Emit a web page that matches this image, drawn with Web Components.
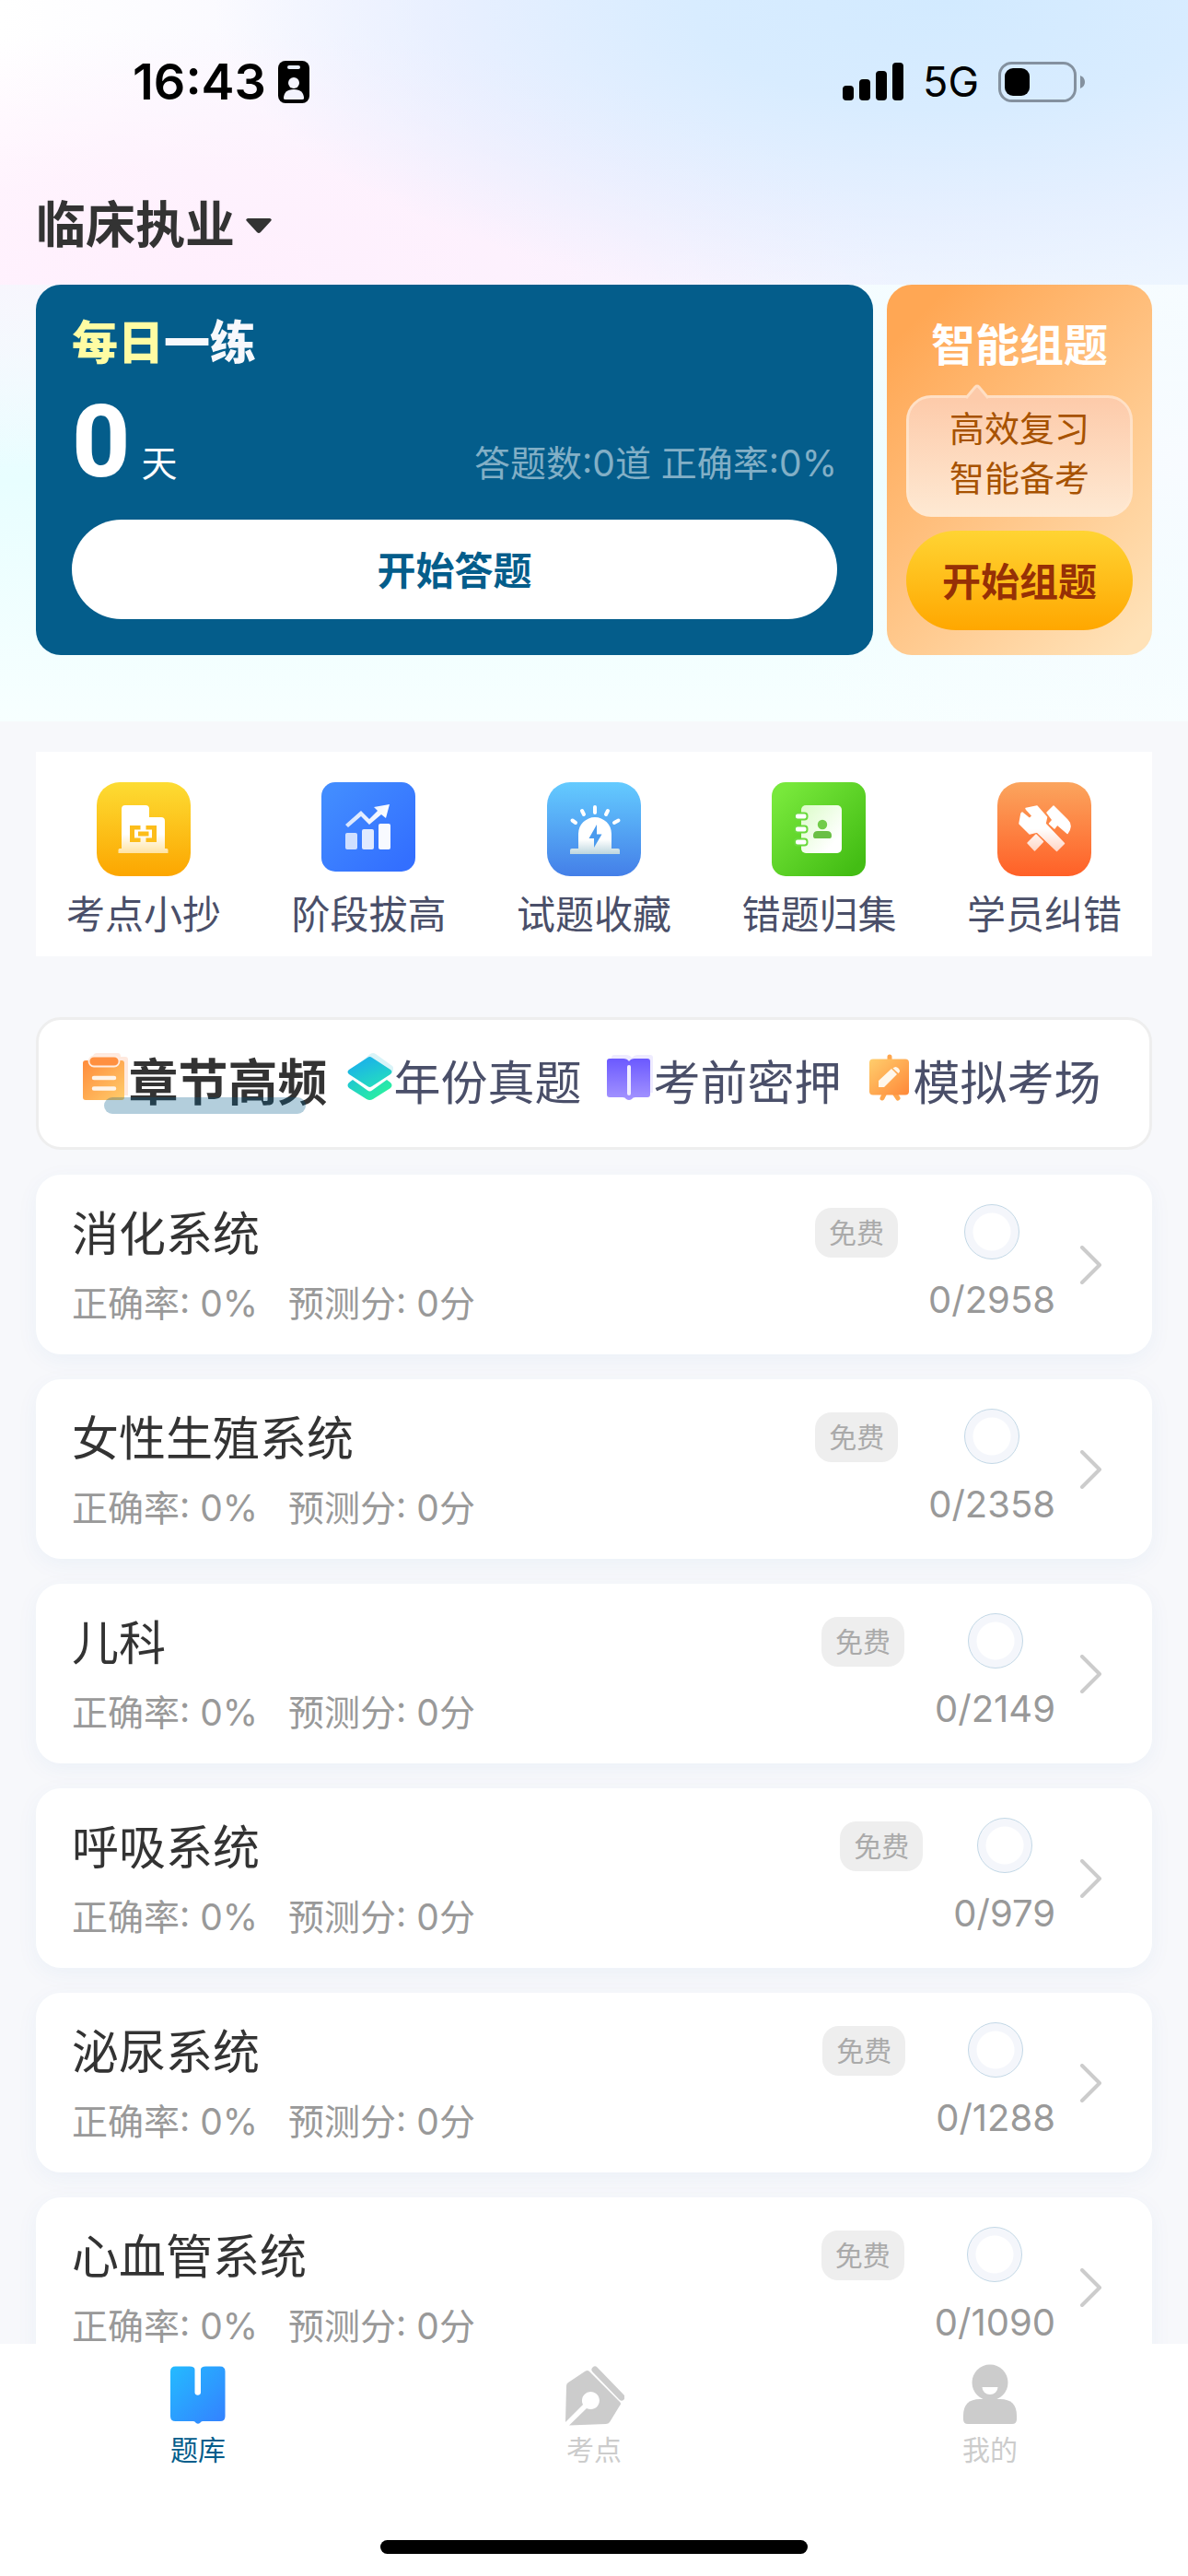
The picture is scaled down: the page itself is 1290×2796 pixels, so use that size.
<!DOCTYPE html>
<html lang="zh-CN">
<head>
<meta charset="utf-8">
<meta name="viewport" content="width=device-width, initial-scale=1">
<title>题库</title>
<style>
    html, body {
        margin: 0;
        height: 100%;
    }
    body {
        font-family: Inter, "Noto Sans CJK SC", sans-serif;
        color: #333;
        background: #f7f8fb;
    }
</style>
</head>
<body>
<exam-app></exam-app>

<script>
const reset = `
    * { box-sizing: border-box; }
    button { font: inherit; color: inherit; border: 0; padding: 0; margin: 0; background: none; cursor: pointer; }
    a { color: inherit; text-decoration: none; }
    svg { display: block; flex: none; }
`;

function define(name, html, setup) {
    const template = document.createElement('template');
    template.innerHTML = html;
    window.customElements.define(name, class extends HTMLElement {
        constructor() {
            super();
            this.attachShadow({mode: 'open'});
            this.shadowRoot.appendChild(template.content.cloneNode(true));
        }

        connectedCallback() {
            if (setup) {
                setup(this, this.shadowRoot);
            }
        }
    });
}

const quickIcons = {
    notes: `
        <svg width="102" height="102" viewBox="0 0 102 102">
            <defs>
                <linearGradient id="bg" x1="0" y1="0" x2="0" y2="1"><stop offset="0" stop-color="#fddc33"/><stop offset="1" stop-color="#fca600"/></linearGradient>
                <linearGradient id="fg" x1="0" y1="0" x2="0" y2="1"><stop offset=".6" stop-color="#fff"/><stop offset="1" stop-color="#ffe3a3"/></linearGradient>
            </defs>
            <rect width="102" height="102" rx="25" fill="url(#bg)"/>
            <path d="M27 29q0-4 4-4h22q4 0 4 4v9h13q4 0 4 4v30h2q1.500 0 1.500 1.500V77h-54v-3.500q0-1.500 1.500-1.500H27z" fill="url(#fg)"/>
            <path d="M47.500 47H36v18h11.500v-4.500H41v-9h6.500zM53.500 47H65v18H53.500v-4.500H60v-9h-6.500zM45 53.500h11.500v5H45z" fill="#fcbd1a"/>
        </svg>`,
    chart: `
        <svg width="102" height="102" viewBox="0 0 102 102">
            <defs>
                <linearGradient id="bg" x1="0" y1="0" x2="1" y2="1"><stop offset=".1" stop-color="#428cff"/><stop offset=".9" stop-color="#336fff"/></linearGradient>
                <linearGradient id="fg" x1="0" y1="0" x2="1" y2=".3"><stop offset="0" stop-color="#c9dcff"/><stop offset="1" stop-color="#fff"/></linearGradient>
            </defs>
            <rect width="102" height="97" rx="15" fill="url(#bg)"/>
            <rect x="26" y="55" width="13" height="18" rx="2" fill="#cfdfff"/>
            <rect x="44" y="51" width="13" height="22" rx="2" fill="#e0eaff"/>
            <rect x="62" y="45" width="13" height="28" rx="2" fill="#f8faff"/>
            <path d="M26 46L43 31l9 9 9-9-4-4 17-3-4 15-5-4-13 11-9-9-14 12z" fill="url(#fg)"/>
        </svg>`,
    alarm: `
        <svg width="102" height="102" viewBox="0 0 102 102">
            <defs>
                <linearGradient id="bg" x1="0" y1="0" x2="0" y2="1"><stop offset="0" stop-color="#64cbff"/><stop offset="1" stop-color="#447fe8"/></linearGradient>
                <linearGradient id="fg" x1="0" y1="0" x2="0" y2="1"><stop offset=".6" stop-color="#fff"/><stop offset="1" stop-color="#bcd6de"/></linearGradient>
            </defs>
            <rect width="102" height="102" rx="25" fill="url(#bg)"/>
            <path d="M34 72V56a18 18 0 0 1 36 0v16h7q2 0 2 2v4H25v-4q0-2 2-2z" fill="url(#fg)"/>
            <path d="M52 27v6M66 31l-2 4M77.500 41.500L73 44M38 31l2 4M27.500 41.500L31 44" stroke="#fff" stroke-width="4" stroke-linecap="round"/>
            <path d="M54 46l-8.500 15H51v10l8.500-14.500H54z" fill="#4b9bee"/>
        </svg>`,
    book: `
        <svg width="102" height="102" viewBox="0 0 102 102">
            <defs>
                <linearGradient id="bg" x1="0" y1="0" x2="1" y2="1"><stop offset=".1" stop-color="#78e83b"/><stop offset=".9" stop-color="#43bd14"/></linearGradient>
                <linearGradient id="fg" x1="0" y1="0" x2="1" y2="1"><stop offset="0" stop-color="#dbfcc8"/><stop offset=".8" stop-color="#fff"/></linearGradient>
            </defs>
            <rect width="102" height="102" rx="15" fill="url(#bg)"/>
            <rect x="32" y="25" width="44" height="52" rx="5" fill="url(#fg)"/>
            <g fill="#fff" stroke="#6ada3c" stroke-width="2">
                <rect x="25" y="33.500" width="13.500" height="7" rx="3"/>
                <rect x="25" y="47.500" width="13.500" height="7" rx="3"/>
                <rect x="25" y="61.500" width="13.500" height="7" rx="3"/>
            </g>
            <circle cx="55" cy="46" r="5.200" fill="#72cc4a"/>
            <path d="M45 58q0-5 5-5h10q5 0 5 5 0 3-2 3H47q-2 0-2-3z" fill="#6abf45"/>
        </svg>`,
    tools: `
        <svg width="102" height="102" viewBox="0 0 102 102">
            <defs>
                <linearGradient id="bg" x1="0" y1="0" x2="0" y2="1"><stop offset="0" stop-color="#fba55e"/><stop offset="1" stop-color="#ff6027"/></linearGradient>
                <linearGradient id="fg" gradientUnits="userSpaceOnUse" x1="0" y1="25" x2="0" y2="76"><stop offset=".5" stop-color="#fff"/><stop offset="1" stop-color="#ffd3c2"/></linearGradient>
            </defs>
            <rect width="102" height="102" rx="25" fill="url(#bg)"/>
            <g fill="url(#fg)" stroke="url(#fg)" stroke-width="1.500" stroke-linejoin="round">
                <path d="M31 28.500L43 26l10.500 12L52 45l20.500 21.500-8 8L43 54l-8 2-11-11 2-11 1-1 8 6.500 3-3-6.500-7z"/>
                <path d="M61 26l15 15q6 6 0 14.500L65 46l-3 4-5.500-5 3.500-4-6-8z"/>
                <path d="M42 57l7.500 7.500L40.500 74 33 66z"/>
            </g>
        </svg>`
};

const tabIcons = {
    clipboard: `
        <svg width="51" height="54" viewBox="0 0 51 54">
            <defs><linearGradient id="a" x1="0" y1="0" x2="1" y2="1"><stop offset="0" stop-color="#ff8b3b"/><stop offset="1" stop-color="#ffcd6b"/></linearGradient></defs>
            <path d="M12 3q1-3 4-3h23q3 0 3 4h5q3 0 3 3v39H12z" fill="#ffe9de"/>
            <rect x="1" y="8" width="45" height="43" rx="3" fill="url(#a)"/>
            <rect x="7.500" y="3.500" width="33" height="11" rx="5.500" fill="#ff9040" stroke="#ffede2" stroke-width="1.800"/>
            <path d="M13 27h22M13 38.500h22" stroke="#fff4e8" stroke-width="4.500" stroke-linecap="round"/>
        </svg>`,
    layers: `
        <svg width="51" height="54" viewBox="0 0 51 54">
            <defs><linearGradient id="a" x1="0" y1="0" x2=".6" y2="1"><stop offset=".3" stop-color="#1cb7e4"/><stop offset="1" stop-color="#24dcc0"/></linearGradient>
            <linearGradient id="b" x1="0" y1="0" x2="1" y2=".6"><stop offset="0" stop-color="#1fc6d3"/><stop offset="1" stop-color="#2bf29e"/></linearGradient></defs>
            <path d="M26 1q3-2 6 0l18 13q3 3 0 6L31 34 10 15z" fill="#d9f4f8"/>
            <path d="M7 29l16 11.500q2.500 2 5 0L44 29l4 3q3 3 0 6L29 50q-3.500 2-7 0L3 38q-3-3 0-6z" fill="url(#b)"/>
            <path d="M23 5q2.500-2 5 0l20 13q3 2.500 0 5L28 36q-2.500 2-5 0L3 23q-3-2.500 0-5z" fill="url(#a)"/>
        </svg>`,
    open: `
        <svg width="51" height="54" viewBox="0 0 51 54">
            <defs><linearGradient id="a" x1="0" y1="0" x2="0" y2="1"><stop offset="0" stop-color="#6b59ff"/><stop offset="1" stop-color="#a494ff"/></linearGradient></defs>
            <path d="M6 5q0-3 3-3h13q4 0 6 3 3-3 6-3h14q3 0 3 3v38H6z" fill="#eeebff"/>
            <path d="M1 9q0-3 3-3h15q4 0 6 3 2-3 6-3h14q3 0 3 3v36q0 3-3 3H32q-3 0-4 2-3 2-6 0-1-2-4-2H4q-3 0-3-3z" fill="url(#a)"/>
            <path d="M25 15v29" stroke="#f1edff" stroke-width="4" stroke-linecap="round"/>
        </svg>`,
    board: `
        <svg width="51" height="54" viewBox="0 0 51 54">
            <defs><linearGradient id="a" x1="0" y1="0" x2="1" y2="1"><stop offset="0" stop-color="#ffce6d"/><stop offset="1" stop-color="#ff8838"/></linearGradient></defs>
            <path d="M26 4v8M21 43l-3 6M31 43l4 6" stroke="#ffa64d" stroke-width="5" stroke-linecap="round"/>
            <rect x="4" y="6.500" width="43" height="39" rx="4" fill="url(#a)"/>
            <path d="M14 37v-7l14-13 6 6-14 14zM29.500 16.500q3-3 6 0t0 5.500z" fill="#fff7ea"/>
        </svg>`
};

const navIcons = {
    bank: `
        <svg width="66" height="69" viewBox="0 0 66 69">
            <defs><linearGradient id="a" x1="0" y1="0" x2="1" y2="1"><stop offset="0" stop-color="#24bbff"/><stop offset="1" stop-color="#3480ff"/></linearGradient></defs>
            <path d="M3 8q0-5.500 5.500-5.500H24q5.500 0 5.500 3.500v25a3.300 3.300 0 0 0 6.500 0V6q0-3.500 5.500-3.500H57q5.500 0 5.500 5.500v48.500q0 5.500-5.500 5.500H38q-1.500 0-3 2-2 1.500-4 0-1.500-2-3-2H8.500Q3 62 3 56.500z" fill="url(#a)"/>
        </svg>`,
    pen: `
        <svg width="66" height="69" viewBox="0 0 66 69">
            <path d="M2 63L3 24q0-3 2-4L23 8q3-2 5 0l33 33q2 2 0 4L50 63q-1.500 2-4 2l-40 1.500 19-18.500a9.500 9.500 0 1 0-4-4z" fill="#ccc"/>
            <path d="M34 6l29 30" stroke="#ccc" stroke-width="7" stroke-linecap="round"/>
        </svg>`,
    user: `
        <svg width="66" height="69" viewBox="0 0 66 69">
            <circle cx="33" cy="20" r="19.500" fill="#ccc"/>
            <path d="M4 60V56q0-18 18-18h22q18 0 18 18v4q0 5-5 5H9q-5 0-5-5z" fill="#ccc"/>
            <path d="M24.500 25h17a8.500 8 0 0 1-17 0z" fill="#fff"/>
        </svg>`
};

define('status-bar', `
    <style>
        ${reset}
        :host { display: flex; justify-content: space-between; align-items: center; height: 177px; padding: 0 111px 0 144px; color: #000; }
        div { display: flex; align-items: center; }
        .left { gap: 12px; }
        .right { gap: 21px; }
        time { font-size: 54px; font-weight: 600; }
        .net { font-size: 45px; }
    </style>
    <div class="left">
        <time>16:43</time>
        <svg width="36" height="48" viewBox="0 0 36 48">
            <rect x="1" y="1" width="34" height="46" rx="8"/>
            <rect x="11" y="6" width="14" height="4" rx="2" fill="#e8eefb"/>
            <circle cx="18" cy="25" r="6" fill="#f3f3fd"/>
            <path d="M7 42q0-10 11-10t11 10q0 1-2 1H9q-2 0-2-1z" fill="#f3f3fd"/>
        </svg>
    </div>
    <div class="right">
        <svg width="66" height="42" viewBox="0 0 66 42">
            <rect y="25" width="12" height="16" rx="4"/>
            <rect x="18" y="18" width="12" height="23" rx="4"/>
            <rect x="36" y="9" width="12" height="32" rx="4"/>
            <rect x="54" width="12" height="41" rx="4"/>
        </svg>
        <span class="net">5G</span>
        <svg width="95" height="44" viewBox="0 0 95 44">
            <rect x="1.500" y="1.500" width="82" height="41" rx="13" fill="none" stroke="#84919f" stroke-width="3"/>
            <rect x="7" y="7" width="27" height="30" rx="9"/>
            <path d="M89 15q5 2 5 7t-5 7z" fill="#84919f"/>
        </svg>
    </div>
`);

define('page-header', `
    <style>
        ${reset}
        :host {
            display: block;
            background:
                radial-gradient(ellipse 62% 110% at 80% 0%, #d2eaff 0%, #d8ecff 35%, rgba(224, 236, 255, .6) 70%, rgba(240, 242, 255, 0) 100%),
                radial-gradient(ellipse 60% 90% at 16% 100%, #ffeffd 0%, rgba(255, 240, 253, .8) 45%, rgba(255, 243, 254, 0) 100%),
                linear-gradient(90deg, #fff 0%, #f6f5ff 40%, #eef6ff 100%);
        }
        .bar { display: flex; align-items: center; height: 132px; padding: 3px 39px 0; }
        button { display: flex; align-items: center; gap: 12px; font-size: 54px; font-weight: 600; line-height: 72px; }
    </style>
    <status-bar></status-bar>
    <div class="bar">
        <button type="button"><slot></slot>
            <svg width="28" height="16" viewBox="0 0 28 16"><path d="M2 0h24q3 1 1 3L16 15q-2 2-4 0L1 3q-2-2 1-3z" fill="#333"/></svg>
        </button>
    </div>
`);

define('daily-card', `
    <style>
        ${reset}
        :host { display: flex; flex-direction: column; padding: 39px; border-radius: 27px; background: #045d8b; color: #fff; }
        h2 { margin: 0; white-space: nowrap; font-size: 50px; font-weight: 900; line-height: 48px; color: #f7f8fc; }
        h2 em { font-style: normal; color: #fffca3; }
        .stats { display: flex; align-items: baseline; justify-content: space-between; height: 168px; line-height: 168px; }
        b { margin-right: 12px; font: 800 110px/168px Roboto, sans-serif; }
        .unit { font-size: 39px; }
        .rate { font-size: 39px; color: #82afc6; }
        button { height: 108px; padding-bottom: 3px; border-radius: 54px; background: #fff; color: #045d8b; font-size: 42px; font-weight: 600; }
    </style>
    <h2><em>每日</em>一练</h2>
    <div class="stats">
        <span><b>0</b><span class="unit">天</span></span>
        <span class="rate">答题数:0道 正确率:0%</span>
    </div>
    <button type="button">开始答题</button>
`);

define('smart-card', `
    <style>
        ${reset}
        :host { display: flex; flex-direction: column; padding: 30px 21px 27px; border-radius: 27px; background: linear-gradient(135deg, #ffa754 10%, #ffe2b8 95%); text-align: center; }
        h2 { margin: 0 0 18px; font-size: 48px; font-weight: 700; line-height: 72px; color: #fff; }
        .bubble { position: relative; margin-bottom: 15px; padding: 6px 9px 12px; border: 3px solid rgba(255, 232, 208, .7); border-radius: 27px; background: linear-gradient(#fdcaa9, #fee9d3) border-box; font-size: 38px; line-height: 54px; color: #a75200; }
        .bubble svg { position: absolute; left: 60px; top: -15px; }
        p { margin: 0; }
        button { height: 108px; padding-bottom: 3px; border-radius: 54px; background: linear-gradient(#ffd433, #ffa700); color: #963006; font-size: 42px; font-weight: 700; }
    </style>
    <h2>智能组题</h2>
    <div class="bubble">
        <svg width="28" height="17" viewBox="0 0 28 17"><path d="M2 17L12 3q2-2 4 0l10 14" fill="#fdcaa9"/><path d="M2 15L12 3q2-2 4 0l10 12" fill="none" stroke="#ffdfc4" stroke-width="3"/></svg>
        <p>高效复习</p>
        <p>智能备考</p>
    </div>
    <button type="button">开始组题</button>
`);

define('quick-link', `
    <style>
        ${reset}
        :host { display: block; }
        a { display: flex; flex-direction: column; align-items: center; gap: 12px; font-size: 42px; line-height: 60px; color: #4a4f69; white-space: nowrap; }
    </style>
    <a href="#"><span class="icon"></span><slot></slot></a>
`, (el, root) => {
    root.querySelector('.icon').innerHTML = quickIcons[el.getAttribute('icon')];
});

define('quick-menu', `
    <style>
        :host { display: flex; justify-content: space-between; padding: 33px 33px 15px; background: #fff; }
    </style>
    <slot></slot>
`);

define('tab-item', `
    <style>
        ${reset}
        :host { display: flex; flex: 1; justify-content: center; }
        button { position: relative; display: flex; align-items: center; height: 66px; font-size: 51px; line-height: 66px; color: #4a4f69; white-space: nowrap; }
        .icon { padding-bottom: 12px; }
        :host([active]) button { font-size: 54px; font-weight: 700; color: #333; }
        :host([active]) button::after { content: ""; position: absolute; left: 24px; right: 24px; bottom: 0; height: 18px; border-radius: 9px; background: rgba(4, 93, 139, .3); }
    </style>
    <button type="button" role="tab"><span class="icon"></span><slot></slot></button>
`, (el, root) => {
    root.querySelector('.icon').innerHTML = tabIcons[el.getAttribute('icon')];
    root.querySelector('button').setAttribute('aria-selected', el.hasAttribute('active'));
});

define('tab-strip', `
    <style>
        :host { box-sizing: border-box; display: flex; align-items: center; height: 144px; padding: 0 39px; border: 3px solid #eee; border-radius: 27px; background: #fff; }
    </style>
    <slot></slot>
`);

define('chapter-row', `
    <style>
        ${reset}
        :host { display: block; }
        a { display: flex; align-items: center; height: 195px; padding: 0 54px 0 39px; border-radius: 27px; background: #fff; box-shadow: 0 6px 24px rgba(4, 93, 180, .05); }
        .info { flex: 1; padding-top: 3px; }
        h3 { margin: 0; font-size: 51px; font-weight: 400; line-height: 72px; }
        .sub { display: flex; gap: 33px; margin-top: 9px; font-size: 39px; line-height: 60px; color: #999; }
        .free { align-self: flex-start; margin: 36px 33px 0 0; padding: 0 15px; border-radius: 18px; background: #eee; color: #aaa; font-size: 30px; line-height: 54px; }
        .count { display: flex; flex-direction: column; align-items: center; gap: 15px; margin-right: 27px; color: #999; font-size: 40px; line-height: 57px; }
        .ring { width: 60px; height: 60px; border: 1px solid #c3d8e6; border-radius: 50%; background: radial-gradient(circle, #fff 20px, #f4f6fb 21px); }
    </style>
    <a href="#">
        <div class="info">
            <h3><slot></slot></h3>
            <div class="sub"><span>正确率: 0%</span><span>预测分: 0分</span></div>
        </div>
        <span class="free">免费</span>
        <div class="count"><span class="ring"></span><span class="num"></span></div>
        <svg width="24" height="42" viewBox="0 0 24 42"><path d="M2 2l19 19L2 40" fill="none" stroke="#ccc" stroke-width="4" stroke-linecap="round" stroke-linejoin="round"/></svg>
    </a>
`, (el, root) => {
    root.querySelector('.num').textContent = '0/' + el.getAttribute('total');
});

define('nav-link', `
    <style>
        ${reset}
        :host { display: block; flex: 1; }
        a { display: flex; flex-direction: column; align-items: center; font-size: 30px; line-height: 48px; color: #ccc; }
        :host([active]) a { color: #045d8b; }
    </style>
    <a href="#"><span class="icon"></span><slot></slot></a>
`, (el, root) => {
    root.querySelector('.icon').innerHTML = navIcons[el.getAttribute('icon')];
});

define('bottom-nav', `
    <style>
        :host { box-sizing: border-box; display: flex; flex-direction: column; justify-content: space-between; align-items: center; height: 252px; padding: 22px 0 24px; background: #fff; }
        nav { display: flex; width: 100%; }
        .home { width: 36%; height: 15px; border-radius: 8px; background: #000; }
    </style>
    <nav><slot></slot></nav>
    <div class="home"></div>
`);

define('exam-app', `
    <style>
        ${reset}
        :host { display: flex; flex-direction: column; height: 100vh; }
        main { flex: 1; min-height: 0; overflow: hidden; }
        .hero {
            display: flex; gap: 15px; padding: 0 39px 72px;
            background:
                radial-gradient(ellipse 60% 70% at 0% 0%, #f7f6fd 0%, rgba(247, 246, 253, 0) 60%),
                radial-gradient(ellipse 40% 90% at 100% 40%, #f8fbff 0%, rgba(248, 251, 255, 0) 100%),
                linear-gradient(#f4fdff 0%, #e8feff 45%, #f7ffff 100%);
        }
        daily-card { flex: 1; }
        smart-card { flex: none; width: 288px; }
        .content { display: flex; flex-direction: column; gap: 27px; padding: 33px 39px; }
        quick-menu { margin-bottom: 39px; }
    </style>
    <main>
        <page-header>临床执业</page-header>
        <section class="hero">
            <daily-card></daily-card>
            <smart-card></smart-card>
        </section>
        <section class="content">
            <quick-menu>
                <quick-link icon="notes">考点小抄</quick-link>
                <quick-link icon="chart">阶段拔高</quick-link>
                <quick-link icon="alarm">试题收藏</quick-link>
                <quick-link icon="book">错题归集</quick-link>
                <quick-link icon="tools">学员纠错</quick-link>
            </quick-menu>
            <tab-strip role="tablist">
                <tab-item icon="clipboard" active>章节高频</tab-item>
                <tab-item icon="layers">年份真题</tab-item>
                <tab-item icon="open">考前密押</tab-item>
                <tab-item icon="board">模拟考场</tab-item>
            </tab-strip>
            <chapter-row total="2958">消化系统</chapter-row>
            <chapter-row total="2358">女性生殖系统</chapter-row>
            <chapter-row total="2149">儿科</chapter-row>
            <chapter-row total="979">呼吸系统</chapter-row>
            <chapter-row total="1288">泌尿系统</chapter-row>
            <chapter-row total="1090">心血管系统</chapter-row>
        </section>
    </main>
    <bottom-nav>
        <nav-link icon="bank" active>题库</nav-link>
        <nav-link icon="pen">考点</nav-link>
        <nav-link icon="user">我的</nav-link>
    </bottom-nav>
`, (el, root) => {
    // tapping a tab moves the highlight
    const tabs = root.querySelectorAll('tab-item');
    tabs.forEach((tab) => {
        tab.addEventListener('click', () => {
            tabs.forEach((t) => {
                t.toggleAttribute('active', t === tab);
                t.shadowRoot.querySelector('button').setAttribute('aria-selected', t === tab);
            });
        });
    });
});
</script>
</body>
</html>
